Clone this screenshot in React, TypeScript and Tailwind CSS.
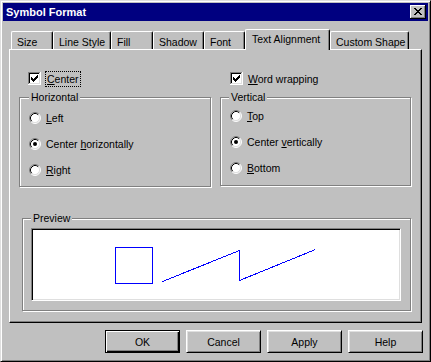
import React from "react";

const CHECK = ["......X", ".....XX", "X...XXX", "XX.XXX.", "XXXXX..", ".XXX...", "..X...."];
const CLOSE = ["XX....XX", ".XX..XX.", "..XXXX..", "...XX...", "..XXXX..", ".XX..XX.", "XX....XX"];

function Pixels({ rows, x, y }: { rows: string[]; x: number; y: number }) {
  return (
    <>
      {rows.flatMap((r, j) =>
        r.split("").map((c, i) =>
          c === "X" ? <rect key={`${i}-${j}`} x={x + i} y={y + j} width={1} height={1} fill="#000" /> : null
        )
      )}
    </>
  );
}

function Checkbox() {
  return (
    <svg width="13" height="13" viewBox="0 0 13 13" shapeRendering="crispEdges" className="shrink-0">
      <rect x="0" y="0" width="13" height="13" fill="#fff" />
      <rect x="0" y="0" width="12" height="1" fill="#808080" />
      <rect x="0" y="0" width="1" height="12" fill="#808080" />
      <rect x="1" y="1" width="10" height="1" fill="#000" />
      <rect x="1" y="1" width="1" height="10" fill="#000" />
      <rect x="0" y="12" width="13" height="1" fill="#fff" />
      <rect x="12" y="0" width="1" height="13" fill="#fff" />
      <rect x="1" y="11" width="11" height="1" fill="#dfdfdf" />
      <rect x="11" y="1" width="1" height="11" fill="#dfdfdf" />
      <Pixels rows={CHECK} x={3} y={3} />
    </svg>
  );
}

function Radio({ checked }: { checked?: boolean }) {
  return (
    <svg width="12" height="12" viewBox="0 0 12 12" className="shrink-0">
      <circle cx="6" cy="6" r="5" fill="#fff" />
      <path d="M2.11 9.89 A5.5 5.5 0 0 1 9.89 2.11" stroke="#808080" fill="none" />
      <path d="M9.89 2.11 A5.5 5.5 0 0 1 2.11 9.89" stroke="#fff" fill="none" />
      <path d="M2.82 9.18 A4.5 4.5 0 0 1 9.18 2.82" stroke="#000" fill="none" />
      <path d="M9.18 2.82 A4.5 4.5 0 0 1 2.82 9.18" stroke="#dfdfdf" fill="none" />
      {checked && <circle cx="6" cy="6" r="2" fill="#000" />}
    </svg>
  );
}

function U({ children }: { children: React.ReactNode }) {
  return <span className="underline decoration-1 underline-offset-[1px]">{children}</span>;
}

function RadioRow({ checked, children }: { checked?: boolean; children: React.ReactNode }) {
  return (
    <div className="flex h-[26px] items-center gap-[5px]">
      <Radio checked={checked} />
      <span className="leading-[12px]">{children}</span>
    </div>
  );
}

function Tab({ w, label, selected }: { w: string; label: string; selected?: boolean }) {
  if (selected) {
    return (
      <div
        className={`${w} relative z-10 -mb-px flex h-[21px] items-start rounded-tl-[2px] rounded-tr-[2px] border-l border-t border-r border-l-white border-t-white border-r-black bg-[#c0c0c0] pl-[6px] pt-[3px] shadow-[inset_-1px_0_0_#808080]`}
      >
        <span className="leading-[12px]">{label}</span>
      </div>
    );
  }
  return (
    <div
      className={`${w} flex h-[18px] items-start rounded-tl-[2px] rounded-tr-[2px] border-l border-t border-r border-l-white border-t-white border-r-black pl-[5px] pt-[4px] shadow-[inset_-1px_0_0_#808080]`}
    >
      <span className="leading-[12px]">{label}</span>
    </div>
  );
}

function Button({ label, def }: { label: string; def?: boolean }) {
  return (
    <div
      className={
        def
          ? "flex h-[23px] w-[75px] items-center justify-center border border-black shadow-[inset_1px_1px_0_#fff,inset_-1px_-1px_0_#000,inset_-2px_-2px_0_#808080]"
          : "flex h-[23px] w-[75px] items-center justify-center border border-t-white border-l-white border-r-black border-b-black shadow-[inset_1px_1px_0_#dfdfdf,inset_-1px_-1px_0_#808080]"
      }
    >
      <span className="leading-[12px]">{label}</span>
    </div>
  );
}

export default function App() {
  return (
    <div className="h-[362px] w-[431px] bg-[#c0c0c0] font-['Liberation_Sans',Arial,sans-serif] text-[10.5px] text-black">
      <div className="flex h-full w-full flex-col border border-t-[#dfdfdf] border-l-[#dfdfdf] border-r-black border-b-black p-[2px] shadow-[inset_1px_1px_0_#fff,inset_-1px_-1px_0_#808080]">
        {/* Title bar */}
        <div className="flex h-[18px] items-start justify-between bg-[#000080] pl-[3px]">
          <span className="mt-[3px] text-[11px] font-bold leading-[13px] text-white">Symbol Format</span>
          <div className="mr-[2px] mt-[2px] h-[14px] w-[16px] bg-[#c0c0c0]">
            <svg width="16" height="14" viewBox="0 0 16 14" shapeRendering="crispEdges">
              <rect x="0" y="0" width="15" height="1" fill="#fff" />
              <rect x="0" y="0" width="1" height="13" fill="#fff" />
              <rect x="0" y="13" width="16" height="1" fill="#000" />
              <rect x="15" y="0" width="1" height="14" fill="#000" />
              <rect x="1" y="12" width="14" height="1" fill="#808080" />
              <rect x="14" y="1" width="1" height="12" fill="#808080" />
              <Pixels rows={CLOSE} x={4} y={3} />
            </svg>
          </div>
        </div>

        {/* Tabs */}
        <div className="ml-[8px] mt-[8px] flex h-[20px] items-end">
          <Tab w="w-[42px]" label="Size" />
          <Tab w="w-[58px]" label="Line Style" />
          <Tab w="w-[42px]" label="Fill" />
          <Tab w="w-[51px]" label="Shadow" />
          <Tab w="w-[41px]" label="Font" />
          <Tab w="w-[85px]" label="Text Alignment" selected />
          <Tab w="w-[79px]" label="Custom Shape" />
        </div>

        {/* Panel */}
        <div className="ml-[6px] flex h-[274px] w-[413px] flex-col border border-t-white border-l-white border-r-black border-b-black pt-[20px] shadow-[inset_-1px_-1px_0_#808080]">
          <div className="flex items-start gap-[9px] pl-[9px]">
            {/* Left column */}
            <div className="flex w-[192px] flex-col">
              <div className="flex h-[17px] items-center pl-[9px]">
                <Checkbox />
                <span className="ml-[4px] border border-dotted border-black px-[1px] leading-[14px]">
                  <U>C</U>enter
                </span>
              </div>
              <div className="relative mt-[10px] h-[90px] border border-[#808080] pl-[9px] pt-[7px] shadow-[inset_1px_1px_0_#fff,1px_1px_0_#fff]">
                <span className="absolute left-[9px] top-[-7px] bg-[#c0c0c0] px-[2px] leading-[12px]">Horizontal</span>
                <RadioRow>
                  <U>L</U>eft
                </RadioRow>
                <RadioRow checked>
                  Center <U>h</U>orizontally
                </RadioRow>
                <RadioRow>
                  <U>R</U>ight
                </RadioRow>
              </div>
            </div>
            {/* Right column */}
            <div className="flex w-[191px] flex-col">
              <div className="flex h-[17px] items-center pl-[10px]">
                <Checkbox />
                <span className="ml-[5px] leading-[14px]">
                  <U>W</U>ord wrapping
                </span>
              </div>
              <div className="relative mt-[10px] h-[89px] border border-[#808080] pl-[9px] pt-[5px] shadow-[inset_1px_1px_0_#fff,1px_1px_0_#fff]">
                <span className="absolute left-[8px] top-[-7px] bg-[#c0c0c0] px-[2px] leading-[12px]">Vertical</span>
                <RadioRow>
                  <U>T</U>op
                </RadioRow>
                <RadioRow checked>
                  Center <U>v</U>ertically
                </RadioRow>
                <RadioRow>
                  <U>B</U>ottom
                </RadioRow>
              </div>
            </div>
          </div>

          {/* Preview */}
          <div className="relative ml-[12px] mt-[31px] h-[93px] w-[389px] border border-[#808080] px-[8px] pt-[9px] shadow-[inset_1px_1px_0_#fff,1px_1px_0_#fff]">
            <span className="absolute left-[8px] top-[-7px] bg-[#c0c0c0] px-[2px] leading-[12px]">Preview</span>
            <div className="h-[73px] w-[370px] border border-t-[#808080] border-l-[#808080] border-r-white border-b-white bg-white shadow-[inset_1px_1px_0_#000,inset_-1px_-1px_0_#dfdfdf]">
              <svg width="366" height="69" viewBox="0 0 366 69" className="ml-[1px] mt-[1px] block" shapeRendering="crispEdges">
                <rect x="82.5" y="17.5" width="37" height="36" fill="none" stroke="#0000ff" strokeWidth="1" />
                <polyline
                  points="129.5,51.5 206.5,20.5 206.5,50.5 282.5,19.5"
                  fill="none"
                  stroke="#0000ff"
                  strokeWidth="1"
                />
              </svg>
            </div>
          </div>
        </div>

        {/* Buttons */}
        <div className="mt-[7px] flex justify-end gap-[6px] pr-[5px]">
          <Button label="OK" def />
          <Button label="Cancel" />
          <Button label="Apply" />
          <Button label="Help" />
        </div>
      </div>
    </div>
  );
}
